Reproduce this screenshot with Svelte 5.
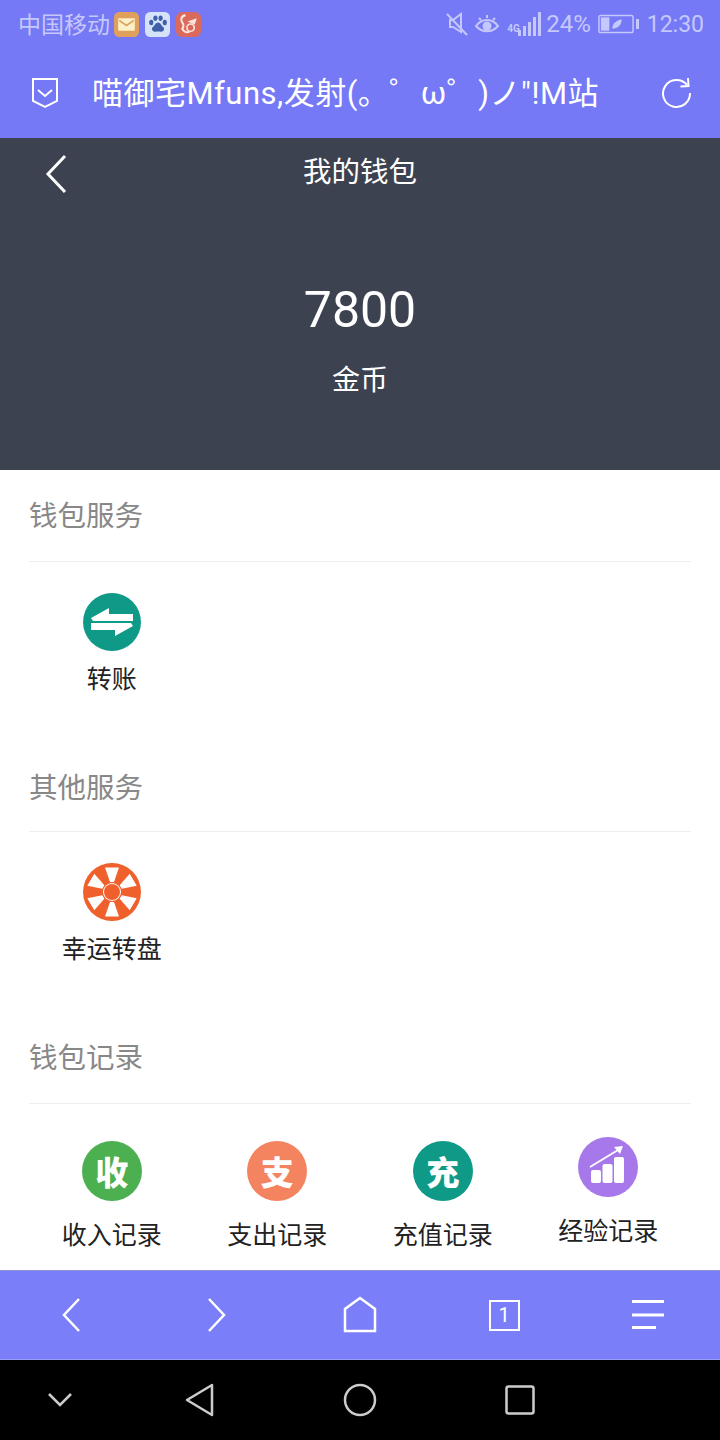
<script>
  const walletRecords = [
    { label: '收入记录', glyph: '收', color: '#4caf50' },
    { label: '支出记录', glyph: '支', color: '#f4845f' },
    { label: '充值记录', glyph: '充', color: '#0f9a87' }
  ]
  const wheelSlices = [0, 60, 120, 180, 240, 300]
  const signalBars = [6, 10, 14, 19, 24]
</script>

<div class="phone">
  <header class="browser-top">
    <div class="status">
      <div class="status__left">
        <span class="carrier">中国移动</span>
        <svg class="app-icon" viewBox="0 0 24 24" width="25" height="25">
          <rect width="24" height="24" rx="5" fill="#e0a05c" />
          <rect x="4" y="6" width="16" height="12" rx="1" fill="#fbf0c8" />
          <path d="M5 8l7 5 7-5" fill="none" stroke="#e0a05c" stroke-width="1.6" />
        </svg>
        <svg class="app-icon" viewBox="0 0 24 24" width="25" height="25">
          <rect width="24" height="24" rx="5" fill="#d5e2fa" />
          <g fill="#3f5fa8">
            <ellipse cx="6" cy="10" rx="2" ry="2.6" />
            <ellipse cx="10" cy="6" rx="2" ry="2.6" />
            <ellipse cx="15" cy="6" rx="2" ry="2.6" />
            <ellipse cx="19" cy="10" rx="2" ry="2.6" />
            <path d="M12.500 10c-2.500 0-3 3-5 4.500-2 2 0 5 2.500 4.500 2-.4 3-.4 5 0 2.500.5 4.500-2.500 2.500-4.500-2-1.500-2.500-4.500-5-4.500z" />
          </g>
        </svg>
        <svg class="app-icon" viewBox="0 0 24 24" width="25" height="25">
          <rect width="24" height="24" rx="6" fill="#dc6a5c" />
          <path d="M9 3c-4 1-5 4-3 7 2 2 1 5 0 6 1 3 4 4 7 3" fill="none" stroke="#fbe6dc" stroke-width="2" />
          <circle cx="14" cy="15" r="3.500" fill="none" stroke="#fbe6dc" stroke-width="1.600" />
          <path d="M11 9l9-3-2 6z" fill="#fbe6dc" />
        </svg>
      </div>
      <div class="status__right">
        <svg class="icon-mute" viewBox="0 0 22 26" width="22" height="26" fill="none" stroke="currentColor" stroke-width="2">
          <path d="M4 9h3l8-6v18l-8-5H4z" />
          <path d="M1 3l20 21" />
        </svg>
        <svg class="icon-eye" viewBox="0 0 26 24" width="26" height="24" fill="none" stroke="currentColor" stroke-width="2">
          <path d="M2 14c6-8 16-8 22 0-6 7-16 7-22 0z" />
          <circle cx="13" cy="14" r="3.500" fill="currentColor" />
          <path d="M5 6l2 2M13 3v3M21 6l-2 2" />
        </svg>
        <span class="network">4G</span>
        <span class="signal">
          {#each signalBars as h}
            <i style="height: {h}px"></i>
          {/each}
        </span>
        <span class="status__text status__text--level">24%</span>
        <span class="battery">
          <svg viewBox="0 0 38 20" width="36" height="20" fill="none">
            <rect x="1" y="1" width="36" height="18" rx="2" stroke="currentColor" stroke-width="1.500" />
            <rect x="3" y="3" width="9" height="14" fill="currentColor" />
            <path d="M15 15c0-6 5-9 10-10 0 6-4 10-10 10z" fill="currentColor" />
          </svg>
          <i class="battery__cap"></i>
        </span>
        <span class="status__text">12:30</span>
      </div>
    </div>
    <div class="address">
      <svg class="address__shield" viewBox="0 0 28 32" width="28" height="32" fill="none" stroke="#fff" stroke-width="2">
        <path d="M2 2h24v22l-12 6-12-6z" />
        <path d="M7 13l7 6 7-6" />
      </svg>
      <span class="address__title">喵御宅Mfuns,发射(。゜ω゜)ノ"!M站</span>
      <svg class="address__reload" viewBox="0 0 32 32" width="32" height="32" fill="none" stroke="#fff" stroke-width="2">
        <path d="M27 8a13.500 13.500 0 1 0 3 8" />
        <path d="M28 1l.5 8-8 .5" />
      </svg>
    </div>
  </header>

  <section class="hero">
    <svg class="hero__back" viewBox="0 0 24 40" width="24" height="40" fill="none" stroke="#fff" stroke-width="3">
      <path d="M21 2L4 20l17 18" />
    </svg>
    <h1 class="hero__title">我的钱包</h1>
    <div class="hero__amount">7800</div>
    <div class="hero__unit">金币</div>
  </section>

  <main class="content">
    <section class="group">
      <h2 class="group__title">钱包服务</h2>
      <div class="grid">
        <div class="item">
          <svg class="item__icon" viewBox="0 0 58 58" width="58" height="58">
            <circle cx="29" cy="29" r="29" fill="#0f9a87" />
            <path d="M8 25l18-10v6h24v7H10z" fill="#fff" />
            <path d="M50 33L32 43v-6H8v-7h40z" fill="#fff" />
          </svg>
          <span class="item__label">转账</span>
        </div>
      </div>
    </section>

    <section class="group">
      <h2 class="group__title">其他服务</h2>
      <div class="grid">
        <div class="item">
          <svg class="item__icon" viewBox="0 0 58 58" width="58" height="58">
            <circle cx="29" cy="29" r="29" fill="#f0602c" />
            {#each wheelSlices as deg}
              <path d="M27 19L22 4.500h14L31 19z" fill="#fff" transform="rotate({deg} 29 29)" />
            {/each}
            <circle cx="29" cy="29" r="9" fill="#fff" />
            <circle cx="29" cy="29" r="8" fill="#f0602c" />
          </svg>
          <span class="item__label">幸运转盘</span>
        </div>
      </div>
    </section>

    <section class="group group--records">
      <h2 class="group__title">钱包记录</h2>
      <div class="grid">
        {#each walletRecords as record}
          <div class="item item--record">
            <span class="badge" style="background: {record.color}">{record.glyph}</span>
            <span class="item__label">{record.label}</span>
          </div>
        {/each}
        <div class="item item--record item--raised">
          <svg class="item__icon" viewBox="0 0 60 60" width="60" height="60">
            <circle cx="30" cy="30" r="30" fill="#a678ea" />
            <g fill="#fff">
              <rect x="13" y="33" width="10" height="13" rx="2" />
              <rect x="24.500" y="27" width="10" height="19" rx="2" />
              <rect x="36" y="20" width="10" height="26" rx="2" />
            </g>
            <path d="M12 30l28-17" stroke="#fff" stroke-width="2" />
            <path d="M36 10l9-1-3 8z" fill="#fff" />
          </svg>
          <span class="item__label">经验记录</span>
        </div>
      </div>
    </section>
  </main>

  <nav class="toolbar">
    <svg viewBox="0 0 24 48" width="24" height="48" fill="none" stroke="#fff" stroke-width="2.500">
      <path d="M19 8L4 24l15 16" />
    </svg>
    <svg viewBox="0 0 24 48" width="24" height="48" fill="none" stroke="#fff" stroke-width="2.500">
      <path d="M5 8l15 16L5 40" />
    </svg>
    <svg viewBox="0 0 34 48" width="34" height="48" fill="none" stroke="#fff" stroke-width="2.500">
      <path d="M2 40V18L17 7l15 11v22z" />
    </svg>
    <span class="tab-count">1</span>
    <svg viewBox="0 0 36 48" width="36" height="48" fill="#fff">
      <rect x="2" y="9" width="32" height="3" />
      <rect x="2" y="22.500" width="32" height="3" />
      <rect x="2" y="35" width="24" height="3" />
    </svg>
  </nav>

  <footer class="sys-nav">
    <svg viewBox="0 0 26 16" width="26" height="16" fill="none" stroke="#ccc" stroke-width="2.500">
      <path d="M2 2l11 11L24 2" />
    </svg>
    <svg viewBox="0 0 30 34" width="30" height="34" fill="none" stroke="#ccc" stroke-width="2.500" stroke-linejoin="round">
      <path d="M27 2v30L2 17z" />
    </svg>
    <svg viewBox="0 0 34 34" width="34" height="34" fill="none" stroke="#ccc" stroke-width="2.500">
      <circle cx="17" cy="17" r="15" />
    </svg>
    <svg viewBox="0 0 30 30" width="30" height="30" fill="none" stroke="#ccc" stroke-width="2.500">
      <rect x="1.500" y="1.500" width="27" height="27" rx="2" />
    </svg>
  </footer>
</div>

<style>
  :global(body) {
    margin: 0;
    background: #fff;
  }

  .phone {
    display: flex;
    flex-direction: column;
    width: 720px;
    height: 1440px;
    overflow: hidden;
    font-family: "Noto Sans CJK SC", "Noto Sans", sans-serif;
  }

  /* Browser chrome */
  .browser-top {
    flex: none;
    height: 138px;
    background: #7579f6;
    color: #fff;
  }

  .status {
    display: flex;
    align-items: center;
    justify-content: space-between;
    height: 48px;
    padding: 0 16px 0 18px;
    color: #c5c8fb;
  }

  .status__left,
  .status__right {
    display: flex;
    align-items: center;
  }

  .carrier {
    margin: 0 4px 2px 0;
    font-size: 23px;
  }

  .app-icon {
    margin-right: 6px;
  }

  .icon-mute {
    margin-right: 6px;
  }

  .icon-eye {
    margin-right: 7px;
  }

  .network {
    width: 13px;
    font: 700 10px/1 "Roboto", sans-serif;
    align-self: flex-start;
    margin-top: 13px;
  }

  .signal {
    display: flex;
    align-items: flex-end;
    gap: 2px;
    height: 24px;
    margin-left: -2px;
  }

  .signal i {
    width: 3px;
    background: currentColor;
  }

  .status__text {
    font: 23px/1 "Roboto", sans-serif;
  }

  .status__text--level {
    margin-left: 5px;
    font-size: 24px;
  }

  .battery {
    display: flex;
    align-items: center;
    gap: 2px;
    margin: 0 8px 0 7px;
  }

  .battery__cap {
    width: 3px;
    height: 10px;
    background: currentColor;
  }

  .address {
    display: flex;
    align-items: center;
    height: 90px;
    padding: 0 28px 0 31px;
  }

  .address__title {
    flex: 1;
    margin-left: 33px;
    padding-bottom: 6px;
    font-family: "Roboto", "Noto Sans CJK SC", sans-serif;
    font-size: 31px;
    letter-spacing: 0.5px;
    white-space: nowrap;
  }

  /* Wallet balance */
  .hero {
    position: relative;
    flex: none;
    display: flex;
    flex-direction: column;
    align-items: center;
    height: 332px;
    background: #3d4250;
    color: #fff;
  }

  .hero__back {
    position: absolute;
    left: 44px;
    top: 16px;
  }

  .hero__title {
    margin: 12px 0 0;
    font-size: 28.500px;
    font-weight: 400;
    line-height: 40px;
  }

  .hero__amount {
    margin-top: 90px;
    font: 50px/60px "Roboto", sans-serif;
  }

  .hero__unit {
    margin-top: 18px;
    font-size: 28px;
    line-height: 40px;
  }

  /* Service lists */
  .content {
    flex: 1;
    min-height: 0;
    padding: 0 29px;
    background: #fff;
  }

  .group {
    height: 270px;
  }

  .group__title {
    margin: 0;
    height: 92px;
    border-bottom: 1px solid #eee;
    font-size: 28.500px;
    font-weight: 400;
    line-height: 88px;
    color: #888;
    box-sizing: border-box;
  }

  .group + .group .group__title {
    line-height: 92px;
  }

  .group--records .group__title {
    height: 94px;
  }

  .grid {
    display: grid;
    grid-template-columns: repeat(4, 165.500px);
    padding-top: 31px;
  }

  .item {
    display: flex;
    flex-direction: column;
    align-items: center;
    gap: 9px;
    color: #222;
  }

  .item__label {
    font-size: 25px;
    line-height: 34px;
  }

  .item--record {
    padding-top: 6px;
    gap: 15px;
  }

  .item--raised {
    padding-top: 2px;
  }

  .badge {
    display: flex;
    align-items: center;
    justify-content: center;
    width: 60px;
    height: 60px;
    border-radius: 50%;
    color: #fff;
    font-size: 33px;
    font-weight: 900;
  }

  /* Browser toolbar */
  .toolbar {
    flex: none;
    display: grid;
    grid-template-columns: repeat(5, 144px);
    justify-items: center;
    align-items: center;
    height: 90px;
    background: #7a7ff9;
    border-top: 1px solid #8d90d8;
    border-bottom: 1px solid #9a9df8;
    box-sizing: border-box;
  }

  .tab-count {
    display: flex;
    align-items: center;
    justify-content: center;
    width: 27px;
    height: 27px;
    border: 2.500px solid #fff;
    color: #fff;
    font: 20px/1 "Roboto", sans-serif;
  }

  .sys-nav {
    flex: none;
    display: grid;
    grid-template-columns: 120px repeat(3, 160px);
    justify-items: center;
    align-items: center;
    height: 80px;
    background: #000;
  }
</style>
